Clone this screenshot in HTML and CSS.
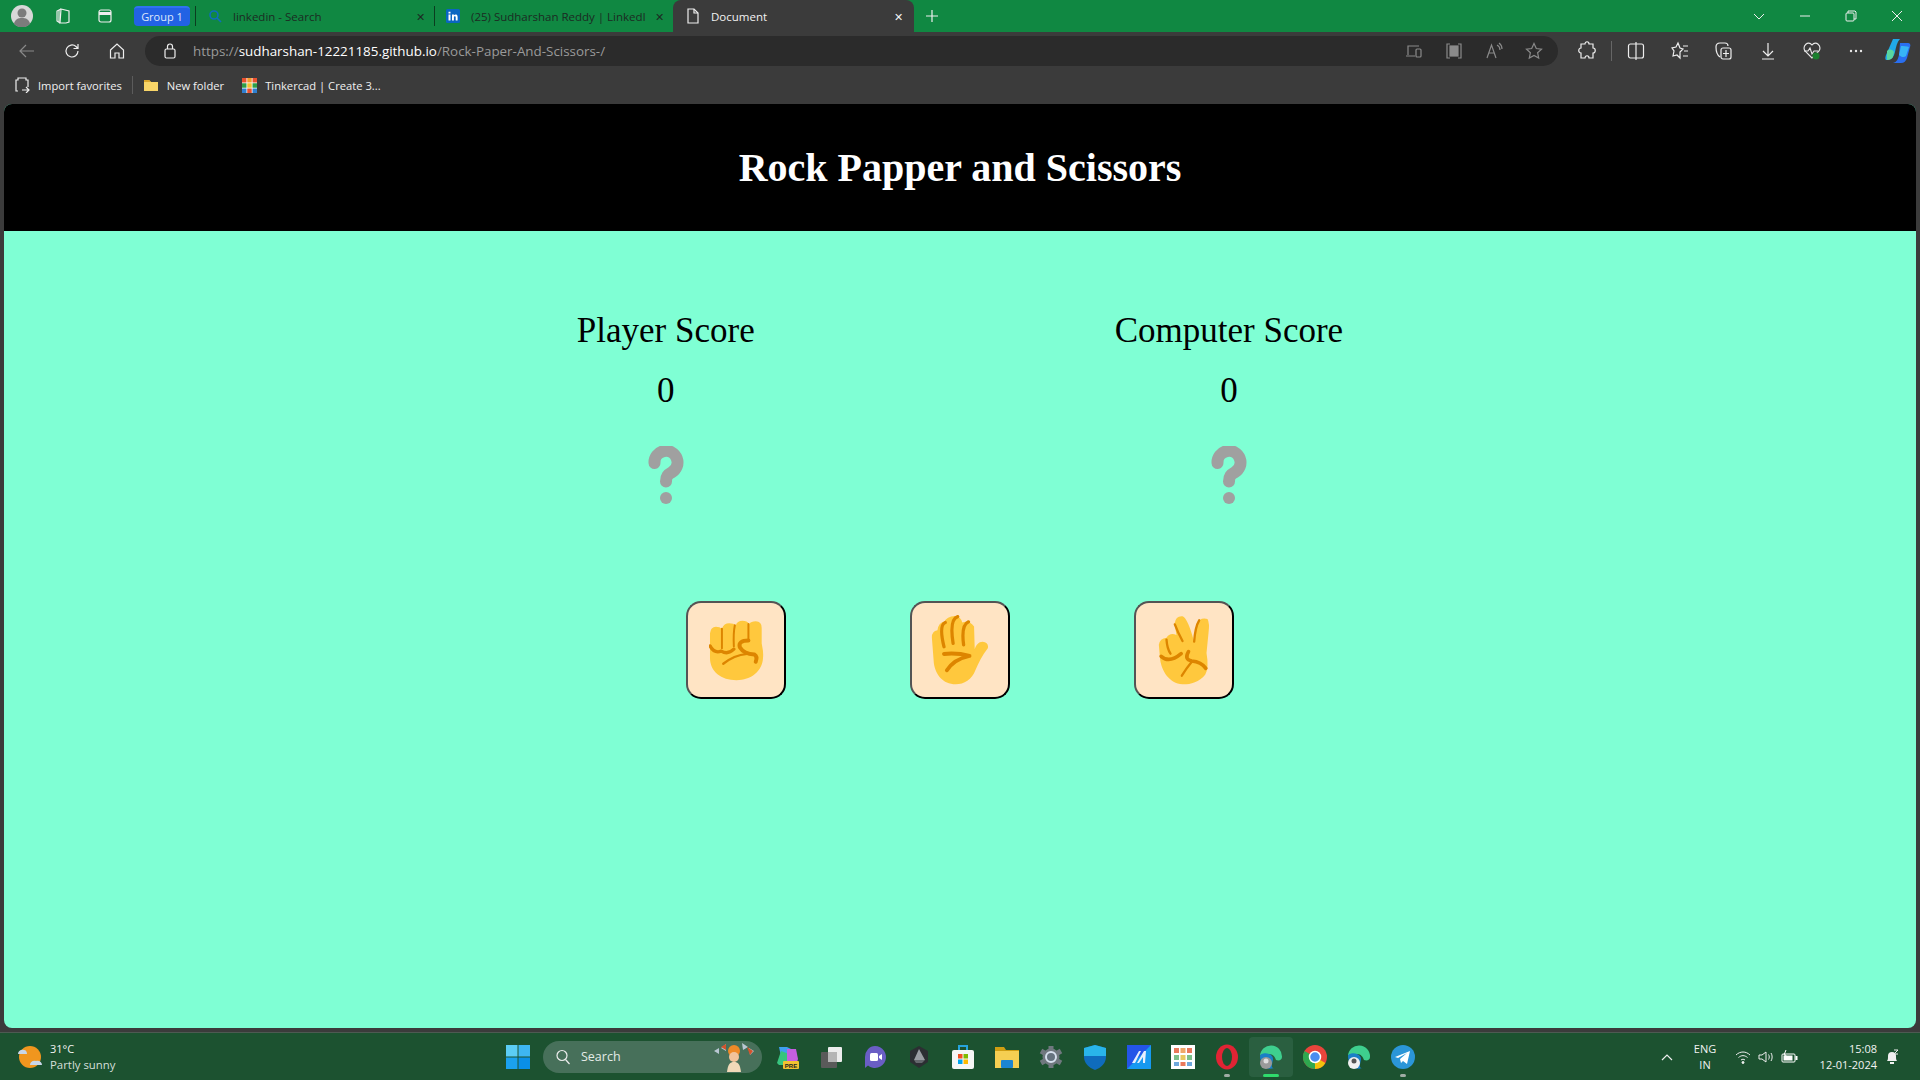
FILE: index.html
```html
<!DOCTYPE html>
<html>
<head>
    <title>Document</title>
    <link rel="stylesheet" href="styles.css">
</head>
<body>
    <!-- browser tab strip -->
    <div class="tabstrip">
        <div class="strip-icon avatar-slot">
            <svg width="22" height="22" viewBox="0 0 22 22"><circle cx="11" cy="11" r="11" fill="#d8d8d8"/><circle cx="11" cy="8" r="4.5" fill="#7c7c7c"/><path d="M3 19c1-5 4-6 8-6s7 1 8 6a11 11 0 0 1-16 0z" fill="#7c7c7c"/></svg>
        </div>
        <div class="strip-icon workspace-slot">
            <svg width="18" height="18" viewBox="0 0 18 18" class="line"><path d="M7 2l8 2v11l-3 1H6z"/><path d="M7 2L3 4v10l3 2"/><path d="M5 3v12"/></svg>
        </div>
        <div class="strip-icon tabs-slot">
            <svg width="16" height="16" viewBox="0 0 16 16" class="line"><rect x="2" y="2" width="12" height="12" rx="2"/><path d="M2 5.5h12" stroke-width="3"/></svg>
        </div>
        <div class="group-chip">Group 1</div>
        <div class="tab-sep"></div>
        <div class="tab tab-search">
            <svg width="14" height="14" viewBox="0 0 14 14"><circle cx="6" cy="6" r="4" fill="none" stroke="#0f6cbd" stroke-width="1.6"/><path d="M9 9l4 4" stroke="#0f6cbd" stroke-width="1.6"/></svg>
            <span class="tab-title">linkedin - Search</span>
            <span class="tab-close">✕</span>
        </div>
        <div class="tab-sep"></div>
        <div class="tab tab-linkedin">
            <svg width="14" height="14" viewBox="0 0 14 14"><rect width="14" height="14" rx="1.5" fill="#0a66c2"/><path d="M2.5 5.5h2V11.500h-2zM2.500 2.800h2v1.800h-2zM6 5.500h1.900v.9c.7-1.300 3.700-1.500 3.700 1.300v3.800H9.700V8.200c0-1.400-1.800-1.300-1.800 0v3.300H6z" fill="#fff"/></svg>
            <span class="tab-title">(25) Sudharshan Reddy | LinkedI</span>
            <span class="tab-close">✕</span>
        </div>
        <div class="tab tab-active">
            <svg width="14" height="16" viewBox="0 0 14 16" class="line"><path d="M2 1h6l4 4v10H2z"/><path d="M8 1v4h4"/></svg>
            <span class="tab-title">Document</span>
            <span class="tab-close">✕</span>
        </div>
        <div class="new-tab">
            <svg width="14" height="14" viewBox="0 0 14 14" class="line"><path d="M7 1v12M1 7h12"/></svg>
        </div>
        <div class="window-btns">
            <svg width="46" height="12" viewBox="0 0 46 12" class="line thin"><path d="M18 4l5 5 5-5"/></svg>
            <svg width="46" height="12" viewBox="0 0 46 12" class="line thin"><path d="M18 6h10"/></svg>
            <svg width="46" height="12" viewBox="0 0 46 12" class="line thin"><rect x="18" y="3" width="8" height="8" rx="1"/><path d="M20 3V1h7l1 1v7h-2"/></svg>
            <svg width="46" height="12" viewBox="0 0 46 12" class="line thin"><path d="M18 1l10 10M28 1L18 11"/></svg>
        </div>
    </div>

    <!-- address bar row -->
    <div class="toolbar">
        <div class="nav-btns">
            <svg width="18" height="18" viewBox="0 0 18 18" class="line dim"><path d="M16 9H2M8 3L2 9l6 6"/></svg>
            <svg width="18" height="18" viewBox="0 0 18 18" class="line"><path d="M15 9a6 6 0 1 1-2-4.500L15 6.500M15 2v4.500h-4.500"/></svg>
            <svg width="18" height="18" viewBox="0 0 18 18" class="line"><path d="M2.500 8L9 2l6.500 6v8H11v-5H7v5H2.500z"/></svg>
        </div>
        <div class="address">
            <svg width="12" height="16" viewBox="0 0 12 16" class="line"><rect x="1" y="6" width="10" height="9" rx="1.500"/><path d="M3.500 6V3.500a2.500 2.500 0 0 1 5 0V6"/></svg>
            <span class="url"><span class="url-dim">https://</span>sudharshan-12221185.github.io<span class="url-dim">/Rock-Paper-And-Scissors-/</span></span>
            <div class="address-icons">
                <svg width="18" height="18" viewBox="0 0 18 18" class="line dim"><path d="M3 13V4h11M1 14h9"/><rect x="11" y="7" width="5" height="8" rx="1"/></svg>
                <svg width="18" height="18" viewBox="0 0 18 18" class="line dim"><path d="M5 2H2v14h3M13 2h3v14h-3"/><rect x="5" y="4" width="8" height="10" fill="#8a8a8a"/></svg>
                <svg width="18" height="18" viewBox="0 0 18 18" class="line dim"><path d="M2 16L6.500 3 11 16M4 11h5M12 3c2 1 3 3 3 5M14 1c2 1.500 3 4 3 6"/></svg>
                <svg width="18" height="18" viewBox="0 0 18 18" class="line dim"><path d="M9 1.500l2.300 5 5.200.6-3.900 3.600 1.100 5.300L9 13.400 4.300 16l1.100-5.300L1.500 7.100l5.200-.6z"/></svg>
            </div>
        </div>
        <div class="toolbar-icons">
            <svg width="18" height="20" viewBox="0 0 18 20" class="line"><path d="M7 3c0-3 4-3 4 0h4v4c3 0 3 5 0 5v5h-4c0-3-4-3-4 0H3v-5c-3 0-3-5 0-5V3z"/></svg>
            <div class="toolbar-sep"></div>
            <svg width="18" height="20" viewBox="0 0 18 20" class="line"><rect x="1.500" y="3" width="15" height="14" rx="2"/><path d="M9 1v18"/></svg>
            <svg width="18" height="20" viewBox="0 0 18 20" class="line"><path d="M7 2l2 5 3 1-3 3 0 6-3-3-4 1 1-5-2-3 4-1zM12 5h5M13 10h4M12 15h5"/></svg>
            <svg width="18" height="20" viewBox="0 0 18 20" class="line"><path d="M5 16C2 14 1 11 1 6c0-3 2-4 4-4h5c2 0 3 1 3 3"/><rect x="6" y="7" width="10" height="11" rx="2"/><path d="M11 9v7M8 12.500h6"/></svg>
            <svg width="18" height="20" viewBox="0 0 18 20" class="line"><path d="M9 2v12M4 10l5 5 5-5M3 18h12"/></svg>
            <svg width="18" height="20" viewBox="0 0 18 20" class="health"><path d="M9 17L2 10C-1 5 5-1 9 4c4-5 10 1 7 6z" fill="none" stroke="#e8e8e8" stroke-width="1.100"/><path d="M1 10h4l2-3 2 6 2-3h4" fill="none" stroke="#e8e8e8" stroke-width="1.100"/><circle cx="13" cy="15" r="3.500" fill="#1b7f2e"/></svg>
            <svg width="18" height="20" viewBox="0 0 18 20"><circle cx="4" cy="10" r="1.200" fill="#e8e8e8"/><circle cx="9" cy="10" r="1.200" fill="#e8e8e8"/><circle cx="14" cy="10" r="1.200" fill="#e8e8e8"/></svg>
            <svg class="copilot" width="26" height="26" viewBox="0 0 26 26"><path d="M8 1h7c-3 3-4 8-5 13-1 4-3 8-8 8-2 0-2-2-1-5z" fill="#21a9e8"/><path d="M2 13c3-3 6-1 7 1l-1 5c-1 2-3 3-6 3z" fill="#5ad6a0"/><path d="M15 5h8c2 0 3 2 2 4l-3 11c-1 3-3 5-6 5H8c4-1 5-4 6-8z" fill="#2a6ff0"/><path d="M16 8c2 0 6 0 8 1l-3 9c-2 2-5 1-7-1z" fill="#37b4f5"/></svg>
        </div>
    </div>

    <!-- favorites row -->
    <div class="favbar">
        <div class="fav fav-import">
            <svg width="16" height="16" viewBox="0 0 16 16" class="line"><path d="M4 14H2V3h2V1h8v2h2v7M8 13h7M12 10l3 3-3 3"/></svg>
            <span>Import favorites</span>
        </div>
        <div class="fav-sep"></div>
        <div class="fav fav-folder">
            <svg width="16" height="16" viewBox="0 0 16 16"><path d="M1 3h5l2 2h7v9H1z" fill="#f8d568"/><path d="M1 3h5l2 2H1z" fill="#dba72c"/></svg>
            <span>New folder</span>
        </div>
        <div class="fav fav-tinker">
            <svg width="15" height="15" viewBox="0 0 15 15"><rect width="15" height="15" fill="#fff"/><rect width="4.500" height="4.500" fill="#e8502f"/><rect x="5.250" width="4.500" height="4.500" fill="#f29a2e"/><rect x="10.500" width="4.500" height="4.500" fill="#e8502f"/><rect y="5.250" width="4.500" height="4.500" fill="#2f9e48"/><rect x="5.250" y="5.250" width="4.500" height="4.500" fill="#f2c230"/><rect x="10.500" y="5.250" width="4.500" height="4.500" fill="#2f9e48"/><rect y="10.500" width="4.500" height="4.500" fill="#2f7fd0"/><rect x="5.250" y="10.500" width="4.500" height="4.500" fill="#e8502f"/><rect x="10.500" y="10.500" width="4.500" height="4.500" fill="#2f7fd0"/></svg>
            <span>Tinkercad | Create 3...</span>
        </div>
    </div>

    <!-- the game page -->
    <div class="page">
        <div class="header">
            <h1>Rock Papper and Scissors</h1>
        </div>
        <div class="main">
            <div class="scores">
                <div class="score-box">
                    <div class="score-label">Player Score</div>
                    <div class="score-num">0</div>
                    <svg class="unknown" width="36" height="58" viewBox="0 0 36 58"><path d="M6.500 17a11.500 11.500 0 1 1 17 9.500c-3.500 2-5.500 3.500-5.500 9" fill="none" stroke="#a0a0a0" stroke-width="12" stroke-linecap="round"/><circle cx="18" cy="52" r="6" fill="#a0a0a0"/></svg>
                </div>
                <div class="score-box">
                    <div class="score-label">Computer Score</div>
                    <div class="score-num">0</div>
                    <svg class="unknown" width="36" height="58" viewBox="0 0 36 58"><path d="M6.500 17a11.500 11.500 0 1 1 17 9.500c-3.500 2-5.500 3.500-5.500 9" fill="none" stroke="#a0a0a0" stroke-width="12" stroke-linecap="round"/><circle cx="18" cy="52" r="6" fill="#a0a0a0"/></svg>
                </div>
            </div>
            <div class="choices">
                <button class="choice">
                    <svg class="hand" width="55" height="61" viewBox="85 80 166 184">
                        <path class="skin" d="M88 120Q90 100 106 100Q118 100 124 106Q130 90 146 90Q160 90 166 96Q170 82 186 82Q200 82 206 92Q212 84 226 84Q244 84 244 104L244 150Q250 175 248 195C246 235 212 262 168 262C122 262 88 236 88 195z"/>
                        <path class="crease" d="M88 158Q100 182 122 174Q142 186 160 168" stroke-width="10"/>
                        <path class="crease" d="M124 106V165M163 96Q158 120 160 160M204 92V138" stroke-width="6"/>
                        <path class="crease" d="M204 142Q172 142 178 162Q190 182 222 184Q232 190 226 206" stroke-width="12"/>
                        <path class="crease" d="M128 212Q160 186 200 182" stroke-width="7"/>
                    </svg>
                </button>
                <button class="choice">
                    <svg class="hand" width="58" height="70" viewBox="95 53 176 214">
                        <path class="skin" d="M97 122Q97 102 114 100Q118 75 135 74Q142 58 168 56Q186 58 190 76Q212 68 226 88L228 158C232 145 240 135 252 135Q272 138 268 155C250 178 240 200 230 222C220 250 195 265 170 265C130 265 108 235 103 200z"/>
                        <path class="crease" d="M138 76Q118 84 134 150M176 58Q150 66 162 140M209 74Q186 84 194 144" stroke-width="10"/>
                        <path class="crease" d="M134 172Q175 168 212 178Q165 188 143 222" stroke-width="12"/>
                    </svg>
                </button>
                <button class="choice">
                    <svg class="hand" width="52" height="70" viewBox="97 56 155 210">
                        <path class="skin" d="M99 145Q102 126 122 124Q132 108 152 116L146 82Q150 58 170 60Q186 66 205 137L212 84Q222 62 245 68Q252 80 248 110L242 170Q250 215 238 235C220 258 190 265 170 264C130 260 108 225 103 190z"/>
                        <path class="crease" d="M147 84Q156 108 170 134M220 72Q208 92 205 136" stroke-width="7"/>
                        <path class="crease" d="M122 130Q124 158 134 172" stroke-width="7"/>
                        <path class="crease" d="M106 180Q130 202 166 172" stroke-width="11"/>
                        <path class="crease" d="M188 166Q174 190 198 194Q226 196 240 216" stroke-width="11"/>
                        <path class="crease" d="M168 238Q184 212 198 196" stroke-width="7"/>
                    </svg>
                </button>
            </div>
        </div>
    </div>

    <!-- windows taskbar -->
    <div class="taskbar">
        <div class="weather">
            <svg width="28" height="28" viewBox="0 0 28 28"><circle cx="14" cy="14" r="11" fill="#f0961e"/><path d="M2 11c0-3 3-5 6-4 2 0 3 2 3 4z" fill="#c9d6e8"/><path d="M14 22c0-3 3-5 6-4 3-1 6 1 6 4z" fill="#c9d6e8"/></svg>
            <div class="weather-text">
                <span class="weather-temp">31°C</span>
                <span class="weather-desc">Partly sunny</span>
            </div>
        </div>
        <div class="task-center">
            <svg class="start" width="24" height="24" viewBox="0 0 24 24"><rect width="11.500" height="11.500" fill="#5ccdf5"/><rect x="12.500" width="11.500" height="11.500" fill="#3eb6f2"/><rect y="12.500" width="11.500" height="11.500" fill="#1ba1ee"/><rect x="12.500" y="12.500" width="11.500" height="11.500" fill="#0a8fe6"/></svg>
            <div class="search-box">
                <svg width="16" height="16" viewBox="0 0 16 16" class="line"><circle cx="7" cy="6.500" r="5"/><path d="M10.500 10.500l4 4.500"/></svg>
                <span class="search-text">Search</span>
                <svg class="search-art" width="42" height="30" viewBox="0 0 42 30"><path d="M1 9l5-3v6zM8 6l5-4v7zM29 1l6 4-5 3zM36 6l5 3-4 4z" fill="#b9c7d3"/><path d="M8 5l5-3v6z" fill="#d5532b"/><path d="M34 5l6 4-3 4z" fill="#d5532b"/><circle cx="21" cy="9" r="6" fill="#ee8a28"/><circle cx="21" cy="15" r="5" fill="#f2c39a"/><path d="M14 30c1-8 3-10 7-10s6 2 7 10z" fill="#f0d9b8"/></svg>
            </div>
            <div class="task-icons">
                <div class="task-slot"><svg width="24" height="24" viewBox="0 0 24 24"><path d="M4 2h8l8 4-3 10H7z" fill="#3f9ff0"/><path d="M2 18L6 6l8 3-2 11H4z" fill="#37c47e"/><path d="M12 4h9l2 10-2 6H12z" fill="#c45fe0"/><rect x="8" y="16" width="16" height="8" rx="1" fill="#f3c230"/><text x="16" y="22.500" class="pre-badge">PRE</text></svg></div>
                <div class="task-slot"><svg width="24" height="24" viewBox="0 0 24 24"><rect x="2" y="7" width="16" height="16" rx="1" fill="#5a5a5a"/><rect x="9" y="2" width="14" height="15" rx="1" fill="#ededed"/><rect x="9" y="7" width="9" height="10" fill="#b5b5b5"/></svg></div>
                <div class="task-slot"><svg width="24" height="24" viewBox="0 0 24 24"><path d="M12 1a11 11 0 1 1-7 19.500L2 23V12A10 11 0 0 1 12 1z" fill="#6a5ec5"/><rect x="7" y="8" width="8" height="8" rx="1.500" fill="#fff"/><path d="M16 11l3-2v6l-3-2z" fill="#fff"/></svg></div>
                <div class="task-slot"><svg width="24" height="24" viewBox="0 0 24 24"><path d="M12 1l9 5v11l-9 6-9-6V6z" fill="#2c2f33"/><path d="M12 4l6 11H7z" fill="#9a9ea3"/><path d="M7 15h11l-3 3H9z" fill="#64686d"/></svg></div>
                <div class="task-slot"><svg width="24" height="26" viewBox="0 0 24 26"><path d="M8 7V2h8v5" fill="none" stroke="#27a4dd" stroke-width="2"/><rect x="1" y="6" width="22" height="19" rx="2" fill="#f6f6f6"/><rect x="7" y="10" width="4.500" height="4.500" fill="#f25022"/><rect x="12.500" y="10" width="4.500" height="4.500" fill="#7fba00"/><rect x="7" y="15.500" width="4.500" height="4.500" fill="#00a4ef"/><rect x="12.500" y="15.500" width="4.500" height="4.500" fill="#ffb900"/></svg></div>
                <div class="task-slot"><svg width="24" height="24" viewBox="0 0 24 24"><path d="M0 2h9l2 3h13v18H0z" fill="#d09e12"/><rect y="6" width="24" height="17" fill="#f5cf52"/><rect x="6" y="15" width="12" height="8" rx="1" fill="#1b85d2"/></svg></div>
                <div class="task-slot"><svg width="24" height="24" viewBox="0 0 24 24"><path d="M12 1v4M12 19v4M2 6l3.500 2M18.500 16l3.500 2M2 18l3.500-2M18.500 8L22 6" stroke="#70787f" stroke-width="5"/><circle cx="12" cy="12" r="8.500" fill="#70787f"/><circle cx="12" cy="12" r="5" fill="#66737f" stroke="#d6e0ee" stroke-width="2"/></svg></div>
                <div class="task-slot"><svg width="24" height="26" viewBox="0 0 24 26"><path d="M12 1l11 3v9c0 6-5 11-11 13C6 24 1 19 1 13V4z" fill="#0f6cbd"/><path d="M12 1l11 3v8H1V4z" fill="#29b5ea"/></svg></div>
                <div class="task-slot"><svg width="24" height="24" viewBox="0 0 24 24"><rect width="24" height="24" fill="#2455e8"/><path d="M0 24L24 0v24z" fill="#1699f0"/><path d="M5 18L12 6h2L8 18zM10 18l7-12h2l-1 12h-2v-6l-4 6z" fill="#e8eefc"/></svg></div>
                <div class="task-slot"><svg width="24" height="24" viewBox="0 0 24 24"><rect width="24" height="24" fill="#fff"/><rect x="3" y="3" width="5" height="5" fill="#e9795b"/><rect x="9.500" y="3" width="5" height="5" fill="#f0a868"/><rect x="16" y="3" width="5" height="5" fill="#e9795b"/><rect x="3" y="10" width="5" height="5" fill="#7cc08a"/><rect x="9.500" y="10" width="5" height="5" fill="#e8c860"/><rect x="16" y="10" width="5" height="5" fill="#7cc08a"/><rect x="3" y="17" width="5" height="4" fill="#6ea8dc"/><rect x="9.500" y="17" width="5" height="4" fill="#e9795b"/><rect x="16" y="17" width="5" height="4" fill="#6ea8dc"/></svg></div>
                <div class="task-slot task-dot"><svg width="24" height="26" viewBox="0 0 24 26"><ellipse cx="12" cy="13" rx="11" ry="12.500" fill="#e02434"/><ellipse cx="12" cy="13" rx="5" ry="9" fill="#1d5231"/></svg></div>
                <div class="task-slot task-running"><svg width="24" height="24" viewBox="0 0 24 24"><path d="M1 11a11 11 0 0 1 22 1c0 3-3 4-6 3-1-3-3-6-7-6-4 0-8 0-9 2z" fill="#3ecf8e"/><path d="M1 11c0-2 5-4 9-2 3 1 4 3 4 5 0 3-3 9 1 9-8 3-14-4-14-12z" fill="#1a7fc7"/><circle cx="7" cy="18" r="6" fill="#9a9a9a"/><circle cx="7" cy="16" r="2.500" fill="#dedede"/></svg></div>
                <div class="task-slot"><svg width="24" height="24" viewBox="0 0 24 24"><circle cx="12" cy="12" r="12" fill="#e8453c"/><path d="M12 12L22.400 18A12 12 0 0 1 12 24z" fill="#f4c20d"/><path d="M12 12L1.600 6A12 12 0 0 0 12 24z" fill="#2fa84f"/><circle cx="12" cy="12" r="5.500" fill="#4a8df0" stroke="#fff" stroke-width="1.500"/></svg></div>
                <div class="task-slot"><svg width="24" height="24" viewBox="0 0 24 24"><path d="M1 11a11 11 0 0 1 22 1c0 3-3 4-6 3-1-3-3-6-7-6-4 0-8 0-9 2z" fill="#3ecf8e"/><path d="M1 11c0-2 5-4 9-2 3 1 4 3 4 5 0 3-3 9 1 9-8 3-14-4-14-12z" fill="#1a7fc7"/><circle cx="7" cy="18" r="6" fill="#f0f0f0"/><circle cx="7" cy="16" r="2.500" fill="#555"/></svg></div>
                <div class="task-slot task-dot"><svg width="24" height="24" viewBox="0 0 24 24"><circle cx="12" cy="12" r="12" fill="#2b96d8"/><path d="M4 12L19 6l-3 13-4-3-2 2-1-4 7-6-9 5z" fill="#fff"/></svg></div>
            </div>
        </div>
        <div class="tray">
            <svg width="12" height="8" viewBox="0 0 12 8" class="line"><path d="M1 7l5-5 5 5"/></svg>
            <div class="lang"><span>ENG</span><span>IN</span></div>
            <svg width="16" height="14" viewBox="0 0 16 14" class="line thin"><path d="M1 5c4-4 10-4 14 0M3.500 7.500c3-2.500 6-2.500 9 0M6 10c1.500-1 2.500-1 4 0"/><circle cx="8" cy="12.500" r="1" fill="#fff"/></svg>
            <svg width="16" height="14" viewBox="0 0 16 14" class="line thin"><path d="M1 5v4h3l4 3V2L4 5zM10.500 4.500c1 1.500 1 3.500 0 5M13 3c1.500 2 1.500 6 0 8"/></svg>
            <svg width="17" height="14" viewBox="0 0 17 14"><rect x="1" y="4" width="13" height="8" rx="1" fill="none" stroke="#fff"/><rect x="2.500" y="5.500" width="9" height="5" fill="#fff"/><rect x="14.500" y="6" width="2" height="4" fill="#fff"/><path d="M5 0L3 5h2L4 8" stroke="#fff" fill="none"/></svg>
            <div class="clock"><span>15:08</span><span>12-01-2024</span></div>
            <svg width="14" height="16" viewBox="0 0 14 16"><path d="M2 12c1-1 1-3 1-5a4 4 0 0 1 8 0c0 2 0 4 1 5z" fill="#f0f0f0"/><rect x="5" y="13" width="4" height="2" fill="#f0f0f0"/><path d="M9 1h4l-4 4h4" stroke="#f0f0f0" fill="none"/></svg>
        </div>
    </div>
</body>
</html>
```

FILE: styles.css
```css
* {
    box-sizing: border-box;
}

html, body {
    margin: 0;
    height: 100%;
}

body {
    height: 1080px;
    overflow: hidden;
    display: flex;
    flex-direction: column;
    background-color: #3b3b3b;
    color: #f0f0f0;
    font-family: "Open Sans", "Noto Sans", sans-serif;
    font-size: 12px;
}

svg {
    display: block;
    flex-shrink: 0;
}

.line {
    fill: none;
    stroke: #eeeeee;
    stroke-width: 1.2;
}

.thin {
    stroke-width: 1;
}

.dim {
    stroke: #8a8a8a;
}

/* tab strip */
.tabstrip {
    height: 32px;
    display: flex;
    align-items: center;
    background-color: #108842;
}

.strip-icon {
    display: flex;
    justify-content: center;
}

.avatar-slot {
    width: 44px;
}

.workspace-slot {
    width: 38px;
}

.tabs-slot {
    width: 46px;
}

.group-chip {
    width: 56px;
    height: 20px;
    margin-left: 6px;
    border-radius: 4px;
    background-color: #2262e4;
    border-top: 2px solid #2f73f0;
    color: #dfe8fa;
    line-height: 18px;
    text-align: center;
    font-size: 11px;
}

.tab-sep {
    width: 1px;
    height: 20px;
    margin: 0 0 0 5px;
    background-color: #0b3d20;
}

.tab {
    height: 32px;
    display: flex;
    align-items: center;
    color: #1c2b22;
    font-size: 11.5px;
}

.tab-title {
    flex: 1;
    margin-left: 11px;
    white-space: nowrap;
}

.tab-close {
    font-size: 11px;
}

.tab-search {
    width: 233px;
    padding: 0 4px 0 12px;
}

.tab-linkedin {
    width: 233px;
    margin-right: 5px;
    padding: 0 4px 0 11px;
}

.tab-active {
    width: 241px;
    padding: 0 11px 0 13px;
    border-radius: 8px 8px 0 0;
    background-color: #3b3b3b;
    color: #f2f2f2;
}

.new-tab {
    margin-left: 11px;
}

.window-btns {
    margin-left: auto;
    display: flex;
}

/* address row */
.toolbar {
    height: 38px;
    display: flex;
    align-items: center;
}

.nav-btns {
    width: 145px;
    padding-left: 18px;
    display: flex;
    gap: 27px;
}

.address {
    width: 1413px;
    height: 30px;
    display: flex;
    align-items: center;
    padding-left: 19px;
    border-radius: 15px;
    background-color: #2b2b2b;
}

.url {
    margin-left: 17px;
    font-size: 13.4px;
    color: #ffffff;
}

.url-dim {
    color: #9a9a9a;
}

.address-icons {
    margin-left: auto;
    padding-right: 15px;
    display: flex;
    gap: 22px;
}

.toolbar-icons {
    flex: 1;
    display: flex;
    align-items: center;
    padding-left: 20px;
    gap: 26px;
}

.toolbar-sep {
    width: 1px;
    height: 20px;
    margin: 0 -11px;
    background-color: #666666;
}

.copilot {
    margin-left: -6px;
}

/* favorites row */
.favbar {
    height: 34px;
    display: flex;
    align-items: center;
    padding: 0 0 4px 14px;
    font-size: 11.2px;
}

.fav {
    display: flex;
    align-items: center;
    gap: 8px;
}

.fav-sep {
    width: 1px;
    height: 18px;
    margin: 0 10px;
    background-color: #5c5c5c;
}

.fav-tinker {
    margin-left: 18px;
}

/* game page */
.page {
    flex: 1;
    margin: 0 4px 4px;
    display: flex;
    flex-direction: column;
    border-radius: 8px;
    overflow: hidden;
    background-color: #7fffd4;
    color: #000;
    font-family: "Liberation Serif", serif;
}

.header {
    height: 127px;
    display: flex;
    align-items: center;
    justify-content: center;
    background-color: #000;
    color: #fff;
}

h1 {
    margin: 0;
    font-size: 40px;
}

.main {
    flex: 1;
}

.scores {
    display: flex;
    justify-content: center;
    gap: 360px;
    margin-top: 76px;
}

.score-box {
    display: flex;
    flex-direction: column;
    align-items: center;
}

.score-label {
    font-size: 35px;
    line-height: 48px;
}

.score-num {
    margin-top: 13px;
    font-size: 35px;
    line-height: 46px;
}

.unknown {
    margin-top: 32px;
}

.choices {
    display: flex;
    justify-content: center;
    gap: 124px;
    margin-top: 97px;
}

.choice {
    width: 100px;
    height: 98px;
    padding: 0;
    display: flex;
    align-items: center;
    justify-content: center;
    border: 2px outset #000;
    border-radius: 15px;
    background-color: #ffe4c4;
}

.skin {
    fill: #ffc83d;
}

.crease {
    fill: none;
    stroke: #dd8500;
    stroke-linecap: round;
    stroke-linejoin: round;
}

/* taskbar */
.taskbar {
    height: 48px;
    display: flex;
    align-items: center;
    border-top: 1px solid #4d5a52;
    background-color: #1c5230;
    color: #f2f2f2;
}

.weather {
    width: 506px;
    padding-left: 16px;
    display: flex;
    align-items: center;
    gap: 6px;
}

.weather-text {
    display: flex;
    flex-direction: column;
    font-size: 11px;
    line-height: 16px;
}

.weather-desc {
    font-size: 11.4px;
    color: #d5dfd9;
}

.task-center {
    display: flex;
    align-items: center;
}

.start {
    margin-right: 13px;
}

.search-box {
    width: 219px;
    height: 32px;
    display: flex;
    align-items: center;
    padding: 0 7px 0 12px;
    border-radius: 16px;
    background-color: #47705a;
}

.search-text {
    margin-left: 10px;
    font-size: 12.5px;
    color: #e4ebe7;
}

.search-art {
    margin-left: auto;
}

.pre-badge {
    font-family: "Liberation Sans", sans-serif;
    font-size: 6px;
    font-weight: bold;
    fill: #222;
    text-anchor: middle;
}

.task-icons {
    display: flex;
    margin-left: 3px;
}

.task-slot {
    position: relative;
    width: 44px;
    height: 40px;
    display: flex;
    align-items: center;
    justify-content: center;
    border-radius: 4px;
}

.task-running {
    background-color: #2a5f40;
}

/* little marks under the running apps */
.task-running::after,
.task-dot::after {
    content: "";
    position: absolute;
    bottom: 0;
    left: 50%;
    height: 3px;
    border-radius: 2px;
}

.task-running::after {
    width: 16px;
    margin-left: -8px;
    background-color: #2fdc6c;
}

.task-dot::after {
    width: 6px;
    margin-left: -3px;
    background-color: #a0aca5;
}

.tray {
    flex: 1;
    display: flex;
    align-items: center;
    padding-left: 236px;
}

.lang {
    width: 48px;
    margin: 0 6px 0 8px;
    display: flex;
    flex-direction: column;
    align-items: center;
    font-size: 11px;
    line-height: 16px;
}

.tray .thin {
    margin-right: 7px;
}

.clock {
    margin-left: auto;
    display: flex;
    flex-direction: column;
    align-items: flex-end;
    font-size: 11px;
    line-height: 16px;
}

.tray > svg:last-child {
    margin: 0 21px 0 8px;
}
```
